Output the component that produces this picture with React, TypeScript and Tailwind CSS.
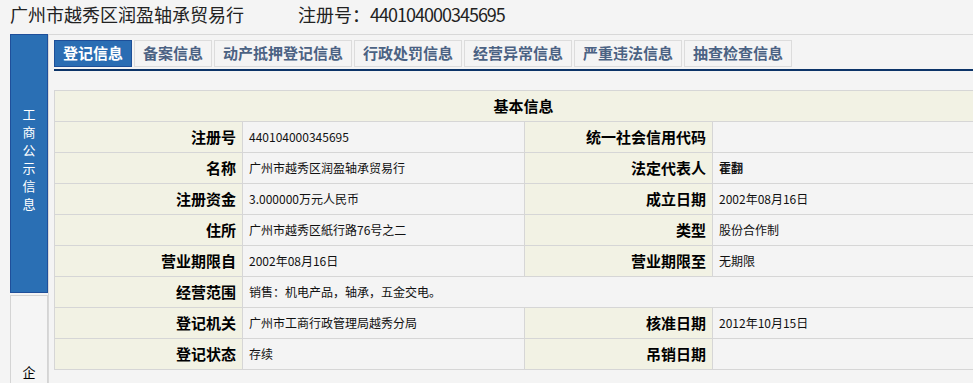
import React from "react";

const tabs = ["登记信息", "备案信息", "动产抵押登记信息", "行政处罚信息", "经营异常信息", "严重违法信息", "抽查检查信息"];

const rows: [string, string, string?, string?][] = [
  ["注册号", "440104000345695", "统一社会信用代码", ""],
  ["名称", "广州市越秀区润盈轴承贸易行", "法定代表人", "霍翻"],
  ["注册资金", "3.000000万元人民币", "成立日期", "2002年08月16日"],
  ["住所", "广州市越秀区紙行路76号之二", "类型", "股份合作制"],
  ["营业期限自", "2002年08月16日", "营业期限至", "无期限"],
  ["经营范围", "销售：机电产品，轴承，五金交电。"],
  ["登记机关", "广州市工商行政管理局越秀分局", "核准日期", "2012年10月15日"],
  ["登记状态", "存续", "吊销日期", ""],
];

const labelCls = "bg-[#f2f2e4] border border-[#d6d6d6] text-right pr-[6px] text-[15px] font-bold text-black";
const valueCls = "border border-[#d6d6d6] pl-[6px] text-[12px] text-[#111]";

export default function App() {
  return (
    <div className="w-[973px] h-[383px] overflow-hidden bg-[#f4f4f4] font-['Noto_Sans_CJK_SC',sans-serif]">
      {/* Title */}
      <div className="h-[34px] pl-[10px] flex items-center text-[18px] text-[#222] leading-none pb-[6px]">
        <span>广州市越秀区润盈轴承贸易行</span>
        <span className="ml-[54px]">
          注册号：<span className="tracking-[-1px]">440104000345695</span>
        </span>
      </div>

      <div className="flex pl-[10px]">
        {/* Sidebar */}
        <div className="w-[38px] flex flex-col gap-[2px] shrink-0">
          <div className="h-[259px] bg-[#2a6fb4] border border-[#1f4f9a] flex flex-col items-center pt-[70px] text-white text-[13px] leading-[18px]">
            {"工商公示信息".split("").map((c, i) => (
              <span key={i}>{c}</span>
            ))}
          </div>
          <div className="h-[100px] bg-[#f5f5f5] border border-[#d4d4d4] flex flex-col items-center pt-[67px] text-[13px] leading-[18px] text-black">
            <span>企</span>
          </div>
        </div>

        {/* Main panel */}
        <div className="flex-1 border-l border-t border-[#d8d8d8] pl-[5px] pt-[5px] h-[360px] overflow-hidden">
          <div className="flex gap-[2px] h-[27px]">
            {tabs.map((t, i) => (
              <div
                key={t}
                className={
                  i === 0
                    ? "h-full px-[8px] flex items-center text-[15px] font-bold text-white bg-[#2a6db3] border border-[#1d4f98]"
                    : "h-full px-[8px] flex items-center text-[15px] font-bold text-[#4b6283] bg-[#f4f4f4] border border-[#dcdcdc]"
                }
              >
                {t}
              </div>
            ))}
          </div>
          <div className="h-[2px] bg-[#0c3468] mt-[2px] w-[940px]" />

          <table className="mt-[19px] w-[938px] border-collapse table-fixed">
            <colgroup>
              <col className="w-[188px]" />
              <col className="w-[282px]" />
              <col className="w-[188px]" />
              <col className="w-[280px]" />
            </colgroup>
            <tbody>
              <tr className="h-[31px]">
                <td colSpan={4} className="bg-[#f2f2e4] border border-[#d6d6d6] text-center text-[15px] font-bold text-black">
                  基本信息
                </td>
              </tr>
              {rows.map((r) =>
                r.length === 2 ? (
                  <tr key={r[0]} className="h-[31px]">
                    <td className={labelCls}>{r[0]}</td>
                    <td colSpan={3} className={valueCls}>{r[1]}</td>
                  </tr>
                ) : (
                  <tr key={r[0]} className="h-[31px]">
                    <td className={labelCls}>{r[0]}</td>
                    <td className={valueCls}>{r[1]}</td>
                    <td className={labelCls}>{r[2]}</td>
                    <td className={r[2] === "法定代表人" ? valueCls + " font-bold" : valueCls}>{r[3]}</td>
                  </tr>
                )
              )}
            </tbody>
          </table>
        </div>
      </div>
    </div>
  );
}
